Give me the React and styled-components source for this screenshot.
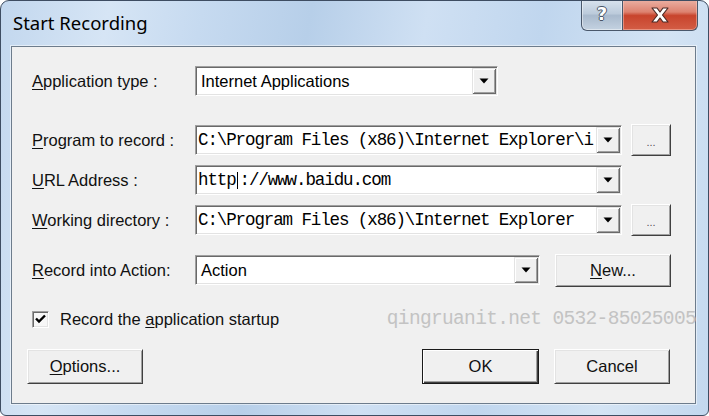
import React from 'react';
import styled, { createGlobalStyle, css } from 'styled-components';

const GlobalStyle = createGlobalStyle`
  html, body {
    margin: 0;
    padding: 0;
    background: #ffffff;
  }
  body {
    font-family: "Liberation Sans", Arial, sans-serif;
  }
`;

const Frame = styled.div`
  width: 709px;
  height: 416px;
  box-sizing: border-box;
  border: 1px solid #3e4d62;
  border-radius: 9px 9px 6px 6px;
  background: linear-gradient(100deg, #c2d7ee 0%, #d6e5f5 14%, #c6daf0 26%, #b7cfe9 40%, #cfe0f3 55%, #c0d6ee 70%, #d4e4f4 86%, #c3d8ef 100%);
  display: flex;
  flex-direction: column;
  overflow: hidden;
`;

const TitleBar = styled.div`
  height: 45px;
  display: flex;
  align-items: flex-start;
  padding: 0 10px 0 12px;
`;

const Title = styled.div`
  font-family: "Noto Sans", "Open Sans", sans-serif;
  font-size: 18.5px;
  line-height: 24px;
  color: #000;
  padding-top: 10px;
`;

const CaptionGroup = styled.div`
  margin-left: auto;
  margin-top: -1px;
  display: flex;
  height: 31px;
`;

const CaptionButton = styled.div`
  box-sizing: border-box;
  height: 31px;
  width: ${p => p.$w}px;
  border: 1px solid #4a586b;
  border-top: none;
  display: flex;
  align-items: center;
  justify-content: center;
  ${p => p.$close ? css`
    border-left: none;
    border-radius: 0 0 6px 0;
    background: linear-gradient(#eab0a3 0%, #dd8270 40%, #c8442d 52%, #d35d45 100%);
    box-shadow: inset 0 0 0 1px rgba(255, 210, 200, 0.45);
  ` : css`
    border-radius: 0 0 0 6px;
    background: linear-gradient(#d9e3ee 0%, #bccbdb 45%, #a9bacd 52%, #c4d2e1 100%);
    box-shadow: inset 0 0 0 1px rgba(255, 255, 255, 0.45);
  `}
`;

const HelpGlyph = styled.span`
  font-family: "DejaVu Sans", sans-serif;
  font-weight: bold;
  font-size: 18px;
  line-height: 1;
  color: #ffffff;
  margin-top: -2px;
  text-shadow: 1px 0 0 #4a5566, -1px 0 0 #4a5566, 0 1px 0 #4a5566, 0 -1px 0 #4a5566;
`;

const Client = styled.div`
  flex: 1;
  margin: 0 12px 11px 10px;
  background: #f0f0f0;
  border: 1px solid #6d7c8c;
  box-shadow: 0 0 0 1px rgba(255, 255, 255, 0.5);
  padding: 18px 25px 0 15px;
  display: flex;
  flex-direction: column;
`;

const FieldRow = styled.div`
  display: flex;
  align-items: center;
  height: 32px;
  margin-top: ${p => p.$gap || 0}px;
  padding-left: 5px;
`;

const Label = styled.div`
  width: 163px;
  flex-shrink: 0;
  font-size: 16.5px;
  color: #111;
`;

const Key = styled.span`
  text-decoration: underline;
  text-underline-offset: 2px;
`;

const Combo = styled.div`
  width: ${p => p.$w}px;
  height: 30px;
  box-sizing: border-box;
  border: 1px solid;
  border-color: #a0a0a0 #ffffff #ffffff #a0a0a0;
  box-shadow: inset 1px 1px 0 #696969, inset -1px -1px 0 #e3e3e3;
  background: #ffffff;
  display: flex;
  padding: 1px;
  flex-shrink: 0;
`;

const ComboText = styled.div`
  flex: 1;
  overflow: hidden;
  white-space: nowrap;
  display: flex;
  align-items: center;
  color: #000;
  ${p => p.$mono ? css`
    font-family: "Liberation Mono", "Courier New", monospace;
    font-size: 17.5px;
    letter-spacing: -1.1px;
    padding-left: 1px;
  ` : css`
    font-size: 16.5px;
    padding-left: 4px;
  `}
`;

const Caret = styled.span`
  display: inline-block;
  width: 1px;
  height: 17px;
  background: #000;
  margin: 0 2px 0 1px;
`;

const DropButton = styled.div`
  width: 24px;
  flex-shrink: 0;
  background: #f0f0f0;
  box-shadow: inset 1px 1px 0 #e3e3e3, inset -1px -1px 0 #696969, inset 2px 2px 0 #ffffff, inset -2px -2px 0 #a0a0a0;
  display: flex;
  align-items: center;
  justify-content: center;
`;

const PushButton = styled.div`
  box-sizing: border-box;
  width: ${p => p.$w}px;
  height: ${p => p.$h || 35}px;
  margin-left: ${p => p.$ml || 0}px;
  flex-shrink: 0;
  background: #f0f0f0;
  border: 1px solid;
  display: flex;
  align-items: center;
  justify-content: center;
  font-size: 16.5px;
  color: #111;
  ${p => p.$default ? css`
    border-color: #1a1a1a;
    box-shadow: inset 1px 1px 0 #ffffff, inset -1px -1px 0 #404040, inset -2px -2px 0 #a0a0a0;
  ` : css`
    border-color: #ffffff #404040 #404040 #ffffff;
    box-shadow: inset 1px 1px 0 #e3e3e3, inset -1px -1px 0 #a0a0a0;
  `}
`;

const Dots = styled.span`
  font-size: 11px;
  line-height: 11px;
  color: #555;
  padding-top: 5px;
`;

const CheckRow = styled.div`
  display: flex;
  align-items: center;
  height: 32px;
  margin-top: 17px;
  padding-left: 5px;
`;

const CheckBox = styled.div`
  width: 17px;
  height: 17px;
  box-sizing: border-box;
  border: 1px solid;
  border-color: #a0a0a0 #ffffff #ffffff #a0a0a0;
  box-shadow: inset 1px 1px 0 #696969, inset -1px -1px 0 #e3e3e3;
  background: #f7f7f7;
  display: flex;
  align-items: center;
  justify-content: center;
  margin-right: 11px;
`;

const CheckLabel = styled.span`
  font-size: 16.5px;
  color: #111;
`;

const Watermark = styled.span`
  margin-left: auto;
  margin-right: -26px;
  font-family: "Liberation Mono", "Courier New", monospace;
  font-size: 19.5px;
  letter-spacing: -0.66px;
  color: #c3c3c3;
  white-space: nowrap;
`;

const ButtonRow = styled.div`
  display: flex;
  align-items: center;
  margin-top: 14px;
  gap: 15px;
`;

const Spacer = styled.div`
  flex: 1;
`;

const Arrow = () => (
  <svg width="10" height="6" viewBox="0 0 10 6">
    <polygon points="0.5,0.5 9.5,0.5 5,5.5" fill="#000" />
  </svg>
);

const CloseIcon = () => (
  <svg width="22" height="18" viewBox="0 0 22 18">
    <path d="M3 2 H8 L11 6 L14 2 H19 L13.5 9 L19 16 H14 L11 12 L8 16 H3 L8.5 9 Z"
      fill="#ffffff" stroke="#4b2a26" strokeWidth="1.2" strokeLinejoin="round" />
  </svg>
);

const Tick = () => (
  <svg width="11" height="10" viewBox="0 0 11 10">
    <path d="M1 4.5 L4 7.5 L10 1.5" fill="none" stroke="#000" strokeWidth="2.4" />
  </svg>
);

const Field = ({ width, mono, children }) => (
  <Combo $w={width}>
    <ComboText $mono={mono}>{children}</ComboText>
    <DropButton><Arrow /></DropButton>
  </Combo>
);

export default function App() {
  return (
    <>
      <GlobalStyle />
      <Frame>
        <TitleBar>
          <Title>Start Recording</Title>
          <CaptionGroup>
            <CaptionButton $w={42}><HelpGlyph>?</HelpGlyph></CaptionButton>
            <CaptionButton $w={75} $close><CloseIcon /></CaptionButton>
          </CaptionGroup>
        </TitleBar>

        <Client>
          <FieldRow>
            <Label><Key>A</Key>pplication type :</Label>
            <Field width={303}>Internet Applications</Field>
          </FieldRow>

          <FieldRow $gap={27}>
            <Label><Key>P</Key>rogram to record :</Label>
            <Field width={427} mono>C:\Program Files (x86)\Internet Explorer\i</Field>
            <PushButton $w={40} $h={32} $ml={9}><Dots>...</Dots></PushButton>
          </FieldRow>

          <FieldRow $gap={8}>
            <Label><Key>U</Key>RL Address :</Label>
            <Field width={427} mono>http<Caret />://www.baidu.com</Field>
          </FieldRow>

          <FieldRow $gap={8}>
            <Label><Key>W</Key>orking directory :</Label>
            <Field width={427} mono>C:\Program Files (x86)\Internet Explorer</Field>
            <PushButton $w={40} $h={32} $ml={9}><Dots>...</Dots></PushButton>
          </FieldRow>

          <FieldRow $gap={18}>
            <Label><Key>R</Key>ecord into Action:</Label>
            <Field width={345}>Action</Field>
            <PushButton $w={116} $h={33} $ml={15}><Key>N</Key>ew...</PushButton>
          </FieldRow>

          <CheckRow>
            <CheckBox><Tick /></CheckBox>
            <CheckLabel>Record the <Key>a</Key>pplication startup</CheckLabel>
            <Watermark>qingruanit.net 0532-85025005</Watermark>
          </CheckRow>

          <ButtonRow>
            <PushButton $w={116}><Key>O</Key>ptions...</PushButton>
            <Spacer />
            <PushButton $w={117} $default>OK</PushButton>
            <PushButton $w={116}>Cancel</PushButton>
          </ButtonRow>
        </Client>
      </Frame>
    </>
  );
}
